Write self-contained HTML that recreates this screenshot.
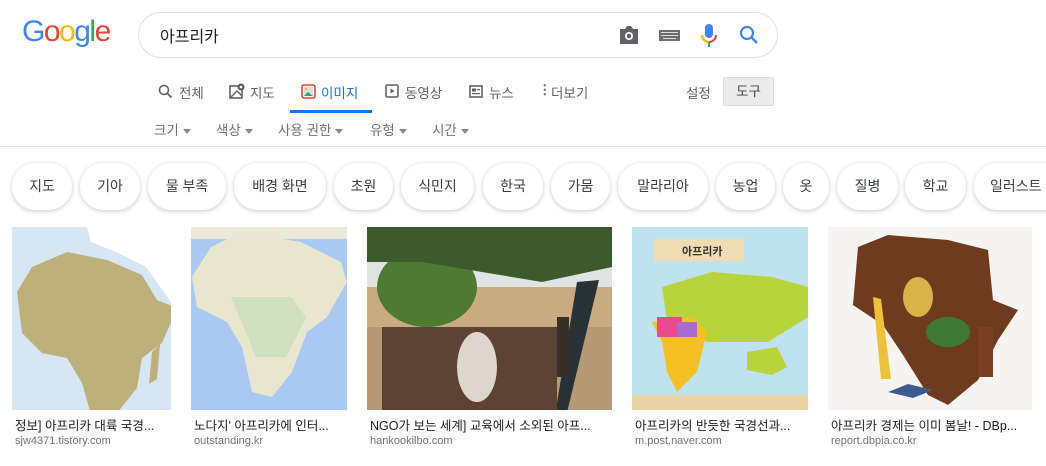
<!DOCTYPE html>
<html><head><meta charset="utf-8"><style>
*{margin:0;padding:0;box-sizing:border-box}
body{width:1046px;height:466px;overflow:hidden;background:#fff;font-family:"Liberation Sans","Noto Sans CJK KR",sans-serif;position:relative;color:#222}
.a{position:absolute}
.logo{left:22px;top:15px;font-size:30px;letter-spacing:-1.5px;font-family:"Liberation Sans",sans-serif}
.sb{left:138px;top:12px;width:640px;height:46px;border:1px solid #dfe1e5;border-radius:24px}
.q{left:160px;top:23px;font-size:16px;color:#222}
.tab{top:82px;font-size:13.5px;color:#5f6368}
.flt{top:119px;font-size:13.5px;color:#70757a}
.tri{display:inline-block;width:0;height:0;border-left:4px solid transparent;border-right:4px solid transparent;border-top:5px solid #888;margin-left:4px;vertical-align:middle}
.chip{position:absolute;top:163px;height:47px;border-radius:24px;background:#fff;box-shadow:0 1px 5px rgba(0,0,0,.22);font-size:14px;color:#3c4043;text-align:center;line-height:47px}
.img{position:absolute;top:227px;height:183px;overflow:hidden}
.cap{position:absolute;top:415px;font-size:12.5px;color:#222;white-space:nowrap}
.dom{position:absolute;top:435px;font-size:11px;color:#70757a}
</style></head><body>
<div class="a logo"><span style="color:#4285f4">G</span><span style="color:#ea4335">o</span><span style="color:#fbbc05">o</span><span style="color:#4285f4">g</span><span style="color:#34a853">l</span><span style="color:#ea4335">e</span></div>
<div class="a sb"></div>
<div class="a q">아프리카</div>
<svg class="a" style="left:618px;top:25px" width="22" height="20" viewBox="0 0 22 20"><path d="M2 4h5l2-3h4l2 3h5v15H2z" fill="#5f6368"/><circle cx="11" cy="11" r="4" fill="#fff"/><circle cx="11" cy="11" r="2.3" fill="#5f6368"/></svg>
<svg class="a" style="left:659px;top:30px" width="21" height="11"><rect width="21" height="11" fill="#6d6d6d"/><g fill="#ddd"><rect x="2" y="2" width="17" height="1"/><rect x="2" y="5" width="17" height="1"/><rect x="4" y="8" width="13" height="1"/></g></svg>
<svg class="a" style="left:700px;top:23px" width="18" height="26" viewBox="0 0 18 26"><rect x="5" y="1" width="8" height="14" rx="4" fill="#4285f4"/><path d="M2 12a7 7 0 0 0 14 0" stroke="#ea4335" stroke-width="2" fill="none"/><path d="M2 12a7 7 0 0 0 7 7" stroke="#fbbc05" stroke-width="2" fill="none"/><rect x="8" y="19" width="2" height="5" fill="#34a853"/></svg>
<svg class="a" style="left:738px;top:24px" width="22" height="22" viewBox="0 0 22 22"><circle cx="9" cy="9" r="6" stroke="#4285f4" stroke-width="2.2" fill="none"/><path d="M13 13l6 6" stroke="#4285f4" stroke-width="2.4"/></svg>

<svg class="a" style="left:158px;top:84px" width="15" height="15"><circle cx="6" cy="6" r="4.5" stroke="#5f6368" stroke-width="1.6" fill="none"/><path d="M9.5 9.5l4 4" stroke="#5f6368" stroke-width="1.8"/></svg>
<div class="a tab" style="left:179px">전체</div>
<svg class="a" style="left:229px;top:83px" width="17" height="16"><rect x="1" y="3" width="12" height="12" stroke="#5f6368" stroke-width="1.6" fill="none"/><path d="M2 14l6-6 5 5" stroke="#5f6368" stroke-width="1.4" fill="none"/><circle cx="12" cy="4" r="3.5" fill="#5f6368"/><circle cx="12" cy="4" r="1.3" fill="#fff"/></svg>
<div class="a tab" style="left:250px">지도</div>
<svg class="a" style="left:301px;top:84px" width="15" height="15"><rect x="1" y="1" width="13" height="13" rx="2" stroke="#ea4335" stroke-width="1.6" fill="none"/><rect x="3" y="3" width="9" height="9" fill="#4285f4" opacity=".25"/><path d="M3 12l4-4 5 4z" fill="#34a853"/><circle cx="5" cy="5" r="1.3" fill="#fbbc05"/></svg>
<div class="a tab" style="left:321px;color:#1a73e8">이미지</div>
<div class="a" style="left:290px;top:110px;width:82px;height:3px;background:#1a73e8"></div>
<svg class="a" style="left:385px;top:84px" width="14" height="14"><rect x="1" y="1" width="12" height="12" rx="1.5" stroke="#5f6368" stroke-width="1.6" fill="none"/><path d="M5.5 4.5v5l4-2.5z" fill="#5f6368"/></svg>
<div class="a tab" style="left:405px">동영상</div>
<svg class="a" style="left:469px;top:85px" width="14" height="13"><rect x="1" y="1" width="12" height="11" stroke="#5f6368" stroke-width="1.6" fill="none"/><rect x="3" y="3.5" width="4" height="3" fill="#5f6368"/><rect x="8" y="4" width="3" height="1.2" fill="#5f6368"/><rect x="3" y="8" width="8" height="1.2" fill="#5f6368"/></svg>
<div class="a tab" style="left:489px">뉴스</div>
<div class="a tab" style="left:538px;font-weight:bold;color:#5f6368">&#8942;</div>
<div class="a tab" style="left:551px">더보기</div>
<div class="a tab" style="left:686px;color:#5f6368">설정</div>
<div class="a" style="left:723px;top:77px;width:51px;height:29px;background:#ebebeb;border:1px solid #ddd;border-radius:2px;font-size:13.5px;color:#444;text-align:center;line-height:27px">도구</div>

<div class="a flt" style="left:154px">크기<span class="tri"></span></div>
<div class="a flt" style="left:216px">색상<span class="tri"></span></div>
<div class="a flt" style="left:278px">사용 권한<span class="tri"></span></div>
<div class="a flt" style="left:370px">유형<span class="tri"></span></div>
<div class="a flt" style="left:432px">시간<span class="tri"></span></div>
<div class="a" style="left:0;top:146px;width:1046px;height:1px;background:#e6e6e6"></div>

<div class="chip" style="left:12px;width:60px">지도</div>
<div class="chip" style="left:80px;width:60px">기아</div>
<div class="chip" style="left:148px;width:78px">물 부족</div>
<div class="chip" style="left:234px;width:92px">배경 화면</div>
<div class="chip" style="left:334px;width:59px">초원</div>
<div class="chip" style="left:401px;width:73px">식민지</div>
<div class="chip" style="left:483px;width:60px">한국</div>
<div class="chip" style="left:551px;width:59px">가뭄</div>
<div class="chip" style="left:618px;width:90px">말라리아</div>
<div class="chip" style="left:716px;width:59px">농업</div>
<div class="chip" style="left:783px;width:46px">옷</div>
<div class="chip" style="left:837px;width:61px">질병</div>
<div class="chip" style="left:905px;width:61px">학교</div>
<div class="chip" style="left:974px;width:100px;text-align:left;padding-left:16px">일러스트</div>

<div class="img" style="left:12px;width:159px;background:#d6e6f2">
<svg width="159" height="183"><path d="M75 0h84v75l-25-35-30-15-25-10z" fill="#fff"/><path d="M5 65l15-25 35-15 40 8 35 15 15 25 20 8-15 35-20 15-5 30-20 25-25 5-10-35-15-25-25-5-20-20z" fill="#bdb07a"/><path d="M140 125l8-8-3 35-8 5z" fill="#bdb07a"/></svg></div>
<div class="img" style="left:191px;width:156px;background:#a9c8f3">
<svg width="156" height="183"><path d="M20 20l30-15 60 10 40 20 6 20-20 35-20 15-15 40-20 25-20-5-10-45-15-25-30-15-5-30z" fill="#e9e6d0"/><path d="M40 70l60 0 15 20-20 40-30 0z" fill="#cfe0bf"/><path d="M0 0h156v12H0z" fill="#ebe8d8"/></svg></div>
<div class="img" style="left:367px;width:245px;background:#b69a78">
<svg width="245" height="183"><rect width="245" height="80" fill="#e2e4e4"/><rect y="60" width="245" height="40" fill="#c9ab82"/><ellipse cx="60" cy="60" rx="50" ry="40" fill="#4f7a34"/><path d="M0 0h245v40l-70 15-120-20-55 0z" fill="#3d5a2d"/><path d="M210 55l22-2-35 145-10-4z" fill="#283236"/><rect x="15" y="100" width="175" height="83" fill="#5d4333"/><ellipse cx="110" cy="140" rx="20" ry="35" fill="#ded6cc"/><rect x="190" y="90" width="12" height="60" fill="#3a2e28"/></svg></div>
<div class="img" style="left:632px;width:176px;background:#bfe2f1">
<svg width="176" height="183"><rect x="22" y="12" width="90" height="22" fill="#efdcb0"/><text x="50" y="28" font-size="11" font-weight="bold" fill="#333" font-family="Noto Sans CJK KR">아프리카</text><path d="M30 60l50-15 60 5 36 10v30l-40 25-60 0-40-15z" fill="#b8d33c"/><path d="M20 95l40-5 15 15-10 40-20 20-10-20-5-30z" fill="#f4c125"/><path d="M25 90h25v20H25z" fill="#e84a8a"/><path d="M45 95h20v15H45z" fill="#a96ad2"/><path d="M115 125l30-5 10 20-15 8-25-5z" fill="#b8d33c"/><rect y="168" width="176" height="15" fill="#e9d3a7"/></svg></div>
<div class="img" style="left:828px;width:204px;background:#f5f4f2">
<svg width="204" height="183"><path d="M30 20l30-12 60 5 40 10 5 50 25 10-20 30-20 40-30 25-20-10-25-40-20-30-30-20z" fill="#6e3b1f"/><rect x="150" y="100" width="15" height="50" fill="#7a4021"/><path d="M45 70l8 2 10 80-10 0z" fill="#edc23a"/><path d="M60 165l20-8 25 6-20 8z" fill="#3d5c8c"/><ellipse cx="90" cy="70" rx="15" ry="20" fill="#d9b24a"/><ellipse cx="120" cy="105" rx="22" ry="15" fill="#3d7a3a"/></svg></div>

<div class="cap" style="left:15px">정보] 아프리카 대륙 국경...</div>
<div class="dom" style="left:15px">sjw4371.tistory.com</div>
<div class="cap" style="left:194px">노다지' 아프리카에 인터...</div>
<div class="dom" style="left:194px">outstanding.kr</div>
<div class="cap" style="left:370px">NGO가 보는 세계] 교육에서 소외된 아프...</div>
<div class="dom" style="left:370px">hankookilbo.com</div>
<div class="cap" style="left:635px">아프리카의 반듯한 국경선과...</div>
<div class="dom" style="left:635px">m.post.naver.com</div>
<div class="cap" style="left:831px">아프리카 경제는 이미 봄날! - DBp...</div>
<div class="dom" style="left:831px">report.dbpia.co.kr</div>
</body></html>
